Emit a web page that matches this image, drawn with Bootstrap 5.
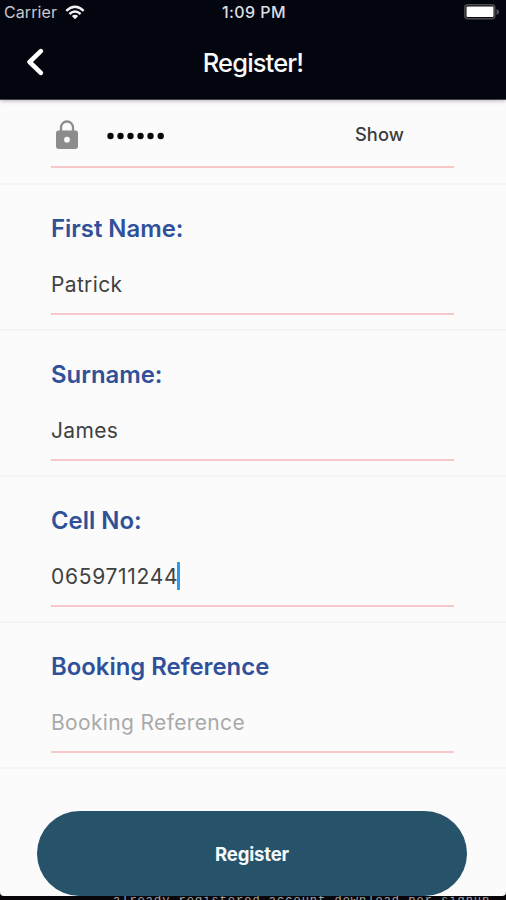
<!DOCTYPE html>
<html lang="en">
<head>
<meta charset="utf-8">
<meta name="viewport" content="width=device-width, initial-scale=1">
<title>Register</title>
<link href="https://cdn.jsdelivr.net/npm/bootstrap@5.3.0/dist/css/bootstrap.min.css" rel="stylesheet">
<style>
body{font-family:Inter,"Liberation Sans",sans-serif;background:#08060a;height:900px;overflow:hidden}
.screen{height:896px;background:#fbfbfb;border-radius:0 0 4px 4px;overflow:hidden}
.topbar{height:100px;background:#03060f;border-bottom:1px solid #46434b;box-shadow:0 1px 4px rgba(0,0,0,.28);position:relative}
.status{height:24px;padding:0 6px 0 4px;font-size:16px;line-height:24px;color:#c9cacd}
.status>*{flex:1 1 0}
.carrier{letter-spacing:.1px}
.clock{color:#dedfe2;font-weight:500;letter-spacing:.45px;padding-left:4px}
.titlebar{height:76px;padding-left:25px}
.page-title{font-size:25.5px;font-weight:500;letter-spacing:-.85px;line-height:76px;padding-top:2px;color:#fafafa}
.field{height:146px;padding:0 52px 0 51px;border-bottom:2px solid #f3f3f4}
.field-pass{height:85px}
.entry{border-bottom:2px solid #f4c9c8;color:#414141;font-size:21px;letter-spacing:.35px;line-height:30px}
.field-pass .entry{height:68px;padding-top:3px;color:#3b3b3b}
.dots{margin-left:28px;margin-top:2px}
.show-link{font-size:18.3px;font-weight:500;letter-spacing:.1px;margin-right:50px;padding-bottom:2px}
.field-label{font-size:23.9px;font-weight:600;color:#30509a;line-height:30px;padding-top:29px}
.field:not(.field-pass) .entry{height:71px;padding-top:26px}
.number{letter-spacing:.7px}
.caret{width:2.5px;height:28px;background:#2a9bea;margin-left:-1px}
.field .hint{color:#aaa}
.btn-register{height:85px;margin:42px 39px 0 37px;padding-top:8px;background:#27536a;color:#f5f9fb;font-size:18.6px;font-weight:700;letter-spacing:-.2px;border-radius:43px}
.console{height:4px;overflow:hidden;font:12px/10px "Liberation Mono",monospace;letter-spacing:1px;color:#a7a5a8;padding-left:113px;white-space:pre}
</style>
</head>
<body>
<main class="screen d-flex flex-column">
  <header class="topbar flex-shrink-0">
    <div class="status d-flex align-items-center">
      <div class="d-flex align-items-center gap-2"><span class="carrier">Carrier</span>
        <svg width="20" height="15" viewBox="0 0 20 15" fill="none" stroke="#f1f1f3" stroke-width="2.4"><path d="M1.3 5.8Q10-2.2 18.7 5.8M4.4 9Q10 4 15.6 9"/><path d="M6.8 11.1Q10 8.5 13.2 11.1L10 14.3Z" fill="#f1f1f3" stroke="none"/></svg>
      </div>
      <div class="clock text-center">1:09 PM</div>
      <div class="d-flex justify-content-end">
        <svg width="36" height="16" viewBox="0 0 36 16"><rect x=".8" y=".8" width="30" height="14" rx="3" fill="#08080c" stroke="#4c4c51" stroke-width="1.5"/><rect x="2.5" y="2.5" width="27" height="10.5" rx="1" fill="#fff"/><path d="M32.5 5v6q2.7-1 2.7-3t-2.7-3" fill="#54545a"/></svg>
      </div>
    </div>
    <div class="titlebar d-grid align-items-center position-relative">
      <svg width="20" height="28" viewBox="0 0 20 28" fill="none" stroke="#fff" stroke-width="4.6" stroke-linecap="round" stroke-linejoin="round"><path d="M15.800 3.200 4.600 14l11.200 10.800"/></svg>
      <h1 class="page-title position-absolute start-0 end-0 m-0 text-center">Register!</h1>
    </div>
  </header>
  <section class="field field-pass flex-shrink-0">
    <div class="entry d-flex align-items-center">
      <svg class="ms-1" width="24" height="30" viewBox="0 0 24 30"><path d="M6 12V7.500a6 6 0 0 1 12 0V12" fill="none" stroke="#8c8c8c" stroke-width="2.300"/><rect x="1" y="10.500" width="22" height="18.500" rx="2.400" fill="#8c8c8c"/><circle cx="12" cy="19.700" r="2.900" fill="#fbfbfb"/></svg>
      <svg class="dots" width="60" height="8" viewBox="0 0 60 8" fill="#080808"><circle cx="3.500" cy="4" r="3.200"/><circle cx="13.500" cy="4" r="3.200"/><circle cx="23.500" cy="4" r="3.200"/><circle cx="33.500" cy="4" r="3.200"/><circle cx="43.500" cy="4" r="3.200"/><circle cx="53.700" cy="4" r="3.200"/></svg>
      <span class="show-link ms-auto">Show</span>
    </div>
  </section>
  <section class="field flex-shrink-0"><div class="field-label">First Name:</div><div class="entry">Patrick</div></section>
  <section class="field flex-shrink-0"><div class="field-label">Surname:</div><div class="entry">James</div></section>
  <section class="field flex-shrink-0"><div class="field-label">Cell No:</div><div class="entry d-flex align-items-start"><span class="number">0659711244</span><span class="caret"></span></div></section>
  <section class="field flex-shrink-0"><div class="field-label">Booking Reference</div><div class="entry hint">Booking Reference</div></section>
  <button type="button" class="btn btn-register flex-shrink-0 border-0">Register</button>
</main>
<div class="console">already registered-account download.per signup</div>
<script src="https://cdn.jsdelivr.net/npm/bootstrap@5.3.0/dist/js/bootstrap.bundle.min.js"></script>
</body>
</html>
